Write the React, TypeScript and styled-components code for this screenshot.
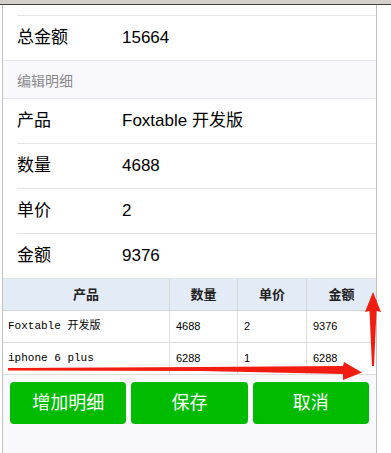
import React from "react";
import styled, { createGlobalStyle } from "styled-components";

const GlobalStyle = createGlobalStyle`
  html, body {
    margin: 0;
    padding: 0;
    background: #ffffff;
  }
  body {
    font-family: "Liberation Sans", "Noto Sans CJK SC", sans-serif;
  }
`;

const fields = [
  { label: "产品", value: "Foxtable 开发版" },
  { label: "数量", value: "4688" },
  { label: "单价", value: "2" },
  { label: "金额", value: "9376" },
];

const details = [
  { product: "Foxtable 开发版", qty: "4688", price: "2", amount: "9376" },
  { product: "iphone 6 plus", qty: "6288", price: "1", amount: "6288" },
];

const App = () => {
  return (
    <Page>
      <GlobalStyle />
      <TitleBar />
      <Frame>
        <FormBlock>
          <CutRow />
          <FormRow $last>
            <Label>总金额</Label>
            <Value>15664</Value>
          </FormRow>
        </FormBlock>
        <SectionTitle>编辑明细</SectionTitle>
        <FormBlock>
          {fields.map((f, i) => (
            <FormRow key={f.label} $last={i === fields.length - 1}>
              <Label>{f.label}</Label>
              <Value>{f.value}</Value>
            </FormRow>
          ))}
        </FormBlock>
        <Grid>
          <thead>
            <tr>
              <Th style={{ width: 166 }}>产品</Th>
              <Th style={{ width: 67 }}>数量</Th>
              <Th style={{ width: 68 }}>单价</Th>
              <Th>金额</Th>
            </tr>
          </thead>
          <tbody>
            {details.map((d) => (
              <tr key={d.product}>
                <Td $mono>{d.product}</Td>
                <Td>{d.qty}</Td>
                <Td>{d.price}</Td>
                <Td>{d.amount}</Td>
              </tr>
            ))}
          </tbody>
        </Grid>
        <ButtonBar>
          <GreenButton>增加明细</GreenButton>
          <GreenButton>保存</GreenButton>
          <GreenButton>取消</GreenButton>
        </ButtonBar>
      </Frame>
      <Marks width="391" height="453" viewBox="0 0 391 453">
        <polygon
          fill="#f31c10"
          points="8,368 200,367 343,366 344,362 362,372.5 343,380 343,374 200,371 8,370.5"
        />
        <polygon
          fill="#f31c10"
          points="373,292 381,312 376.5,311 374,366 372,366 369.5,311 365,312"
        />
      </Marks>
    </Page>
  );
};

const Page = styled.div`
  position: relative;
  width: 391px;
  height: 453px;
  overflow: hidden;
  background: #ffffff;
`;

const TitleBar = styled.div`
  height: 4px;
  background: #d4d0c8;
  border-bottom: 1px solid #404040;
`;

const Frame = styled.div`
  margin-left: 2px;
  width: 373px;
  height: 448px;
  border-left: 1px solid #c0c0c0;
  border-right: 1px solid #c0c0c0;
  background: #f9f8fd;
  display: flex;
  flex-direction: column;
`;

const FormBlock = styled.div`
  background: #ffffff;
  border-bottom: 1px solid #e5e5e5;
`;

const CutRow = styled.div`
  height: 10px;
  margin-left: 14px;
  border-bottom: 1px solid #e5e5e5;
`;

const FormRow = styled.div<{ $last?: boolean }>`
  display: flex;
  align-items: center;
  height: 44px;
  margin-left: 14px;
  border-bottom: ${(p) => (p.$last ? "none" : "1px solid #e5e5e5")};
  font-size: 17px;
  line-height: 17px;
  color: #000;
`;

const Label = styled.div`
  width: 105px;
  font-family: "Noto Sans CJK SC", sans-serif;
  font-size: 17px;
  line-height: 17px;
  padding-bottom: 6px;
`;

const Value = styled.div`
  font-family: "Liberation Sans", "Noto Sans CJK SC", sans-serif;
  line-height: 17px;
  padding-bottom: 1px;
  color: #000;
`;

const SectionTitle = styled.div`
  height: 37px;
  display: flex;
  align-items: center;
  padding-left: 14px;
  font-family: "Noto Sans CJK SC", sans-serif;
  font-size: 14px;
  line-height: 14px;
  color: #8a8a8a;
  border-bottom: 1px solid #e5e5e5;
`;

const Grid = styled.table`
  width: 373px;
  border-collapse: collapse;
  table-layout: fixed;
  background: #ffffff;
`;

const Th = styled.th`
  height: 29px;
  padding: 0 0 2px 0;
  background: #e3ebf6;
  border: 1px solid #d4d4d4;
  border-top: none;
  font-family: "Noto Sans CJK SC", sans-serif;
  font-size: 13px;
  line-height: 13px;
  font-weight: bold;
  color: #222;
  text-align: center;
  &:first-child {
    border-left: none;
  }
  &:last-child {
    border-right: none;
  }
`;

const Td = styled.td<{ $mono?: boolean }>`
  height: 31px;
  padding: 0 0 0 6px;
  border: 1px solid #dedede;
  font-family: ${(p) =>
    p.$mono
      ? `"Liberation Mono", "Noto Sans CJK SC", monospace`
      : `"Liberation Sans", sans-serif`};
  font-size: 11px;
  line-height: 11px;
  color: #000;
  &:first-child {
    border-left: none;
    padding-left: 5px;
  }
  &:last-child {
    border-right: none;
  }
`;

const ButtonBar = styled.div`
  display: grid;
  grid-template-columns: repeat(3, 1fr);
  gap: 5px;
  padding: 7px 7px 0 7px;
`;

const GreenButton = styled.button`
  height: 42px;
  border: none;
  border-radius: 4px;
  background: #00bb00;
  color: #ffffff;
  font-family: "Noto Sans CJK SC", sans-serif;
  font-size: 18px;
  line-height: 18px;
  padding: 0 0 4px 0;
`;

const Marks = styled.svg`
  position: absolute;
  left: 0;
  top: 0;
  pointer-events: none;
`;

export default App;
